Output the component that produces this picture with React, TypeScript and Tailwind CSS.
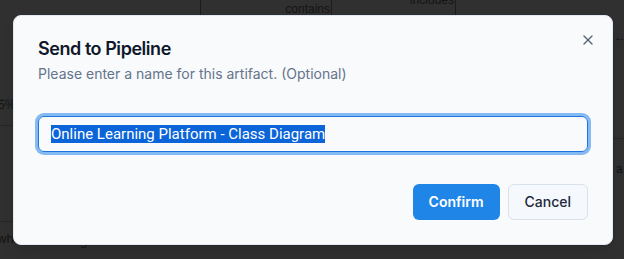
import { useEffect, useRef } from "react";
import { X } from "lucide-react";

function DiagramBackdrop() {
  // faded diagram canvas sitting behind the modal overlay
  return (
    <div className="absolute inset-0 font-['Liberation_Sans',Arial,sans-serif] text-[12px] text-[#141414]">
      <div className="absolute left-[200px] top-0 h-[40px] w-px bg-[#1c1c1c]" />
      <div className="absolute left-[331px] top-0 h-[40px] w-px bg-[#1c1c1c]" />
      <div className="absolute left-[455px] top-0 h-[40px] w-px bg-[#1c1c1c]" />
      <span className="absolute right-[294px] top-[3px] leading-none">contains</span>
      <span className="absolute left-[410px] top-[-6px] leading-none">includes</span>
      <div className="absolute left-0 top-[99px] h-px w-[20px] bg-[#262626]" />
      <span className="absolute left-[-2px] top-[99px] leading-none">5%</span>
      <div className="absolute left-0 top-[125px] h-px w-[20px] bg-[#262626]" />
      <div className="absolute right-0 top-[138px] h-px w-[20px] bg-[#262626]" />
      <span className="absolute left-[614px] top-[31px] leading-none">←</span>
      <span className="absolute left-[616px] top-[163px] leading-none">a</span>
      <div className="absolute left-0 top-[221px] h-px w-[20px] bg-[#262626]" />
      <span className="absolute left-[-3px] top-[232px] text-[13px] leading-none">wh</span>
      <span className="absolute left-[80px] top-[234px] text-[13px] leading-none">g</span>
    </div>
  );
}

export default function App() {
  const inputRef = useRef<HTMLInputElement>(null);

  useEffect(() => {
    inputRef.current?.focus();
    inputRef.current?.select();
  }, []);

  return (
    <div className="relative h-[259px] w-[624px] overflow-hidden bg-[#303030]">
      <DiagramBackdrop />

      <div className="absolute inset-0 flex items-start pl-[13px] pt-[15px]">
        <div className="relative flex w-[600px] flex-col gap-4 rounded-lg border border-[#e2e8f0] bg-[#f8fafc] p-6 font-['Inter',sans-serif] shadow-lg">
          <div className="flex flex-col gap-1.5">
            <h2 className="text-lg leading-none font-semibold tracking-tight text-[#0f172a]">Send to Pipeline</h2>
            <p className="text-sm text-[#64748b]">Please enter a name for this artifact. (Optional)</p>
          </div>

          <div className="py-4">
            <input
              ref={inputRef}
              defaultValue="Online Learning Platform - Class Diagram"
              className="h-9 w-full rounded-md border border-[#1f73dc] bg-transparent px-3 py-1 font-['Roboto',sans-serif] text-[15px] text-[#0f172a] outline-none ring-[3px] ring-[#2483ea]/55 selection:bg-[#0b64d8] selection:text-white"
            />
          </div>

          <div className="flex justify-end gap-2">
            <button className="h-9 rounded-md bg-[#1f86e8] px-4 text-sm font-semibold text-white">Confirm</button>
            <button className="h-9 rounded-md border border-[#d9e1ea] bg-[#f5f8fc] px-4 text-sm font-medium text-[#1e293b]">
              Cancel
            </button>
          </div>

          <button className="absolute top-4 right-4 text-[#334155] opacity-80">
            <X className="h-4 w-4" />
          </button>
        </div>
      </div>
    </div>
  );
}
